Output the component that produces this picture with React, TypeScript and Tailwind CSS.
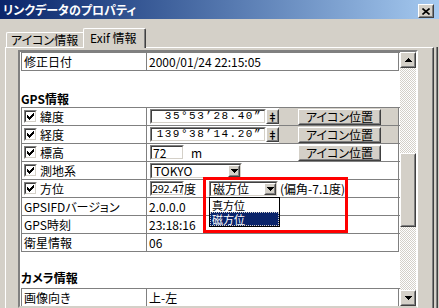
import React from "react";

// Win2000 style bevels
function Sunken({ className = "", inner = "", children }: { className?: string; inner?: string; children?: React.ReactNode }) {
  return (
    <div className={`border border-t-[#808080] border-l-[#808080] border-r-white border-b-white ${className}`}>
      <div className={`w-full h-full border border-t-[#404040] border-l-[#404040] border-r-[#d4d0c8] border-b-[#d4d0c8] bg-white ${inner}`}>
        {children}
      </div>
    </div>
  );
}

function Raised({ className = "", inner = "", children }: { className?: string; inner?: string; children?: React.ReactNode }) {
  return (
    <div className={`border border-t-white border-l-white border-r-[#404040] border-b-[#404040] ${className}`}>
      <div className={`w-full h-full border border-t-[#d4d0c8] border-l-[#d4d0c8] border-r-[#808080] border-b-[#808080] bg-[#d4d0c8] ${inner}`}>
        {children}
      </div>
    </div>
  );
}

function Arrow({ up = false }: { up?: boolean }) {
  return (
    <svg width="7" height="4" viewBox="0 0 7 4" shapeRendering="crispEdges">
      <path d={up ? "M3.5 0 L7 4 L0 4 Z" : "M0 0 L7 0 L3.5 4 Z"} fill="#000" />
    </svg>
  );
}

function Check() {
  return (
    <div className="w-[13px] h-[13px] shrink-0 border border-t-[#808080] border-l-[#808080] border-r-white border-b-white">
      <div className="w-full h-full border border-t-[#404040] border-l-[#404040] border-r-[#d4d0c8] border-b-[#d4d0c8] bg-white flex items-center justify-center">
        <svg width="7" height="7" viewBox="0 0 7 7" shapeRendering="crispEdges">
          <path d="M0 2 L2 4 L6 0 L7 0 L7 3 L2 7 L0 5 Z" fill="#000" />
        </svg>
      </div>
    </div>
  );
}

function Row({ left, children, right = "" }: { left: React.ReactNode; children?: React.ReactNode; right?: string }) {
  return (
    <div className="flex h-[18px] border-t border-[#808080]">
      <div className="w-[125px] border-l border-[#808080] flex items-center pl-[2px] whitespace-nowrap">{left}</div>
      <div className={`w-[253px] border-l border-r border-[#808080] flex items-center whitespace-nowrap ${right}`}>{children}</div>
    </div>
  );
}

function CheckLabel({ text }: { text: string }) {
  return (
    <div className="flex items-center gap-[3px]">
      <Check />
      <span>{text}</span>
    </div>
  );
}

function IconPosButton() {
  return (
    <Raised className="w-[83px] h-[16px]" inner="flex items-center justify-center text-[12px] leading-none">
      アイコン位置
    </Raised>
  );
}

function Combo({ text, w }: { text: string; w: string }) {
  return (
    <Sunken className={`${w} h-[16px]`} inner="flex items-center justify-between">
      <span className="pl-[2px] leading-none">{text}</span>
      <Raised className="w-[12px] h-full" inner="flex items-center justify-center">
        <Arrow />
      </Raised>
    </Sunken>
  );
}

function Coord({ value }: { value: string }) {
  return (
    <div className="flex items-center">
      <Sunken className="w-[116px] h-[15px]" inner="flex items-center justify-end pr-[2px] overflow-hidden">
        <span className="font-['Liberation_Mono',monospace] text-[11px] tracking-[1.5px] leading-none">{value}</span>
      </Sunken>
      <Raised className="w-[13px] h-[15px]" inner="flex items-center justify-center">
        <span className="text-[10px] font-bold leading-none">‡</span>
      </Raised>
    </div>
  );
}

export default function App() {
  return (
    <div className="w-[439px] h-[308px] bg-[#d4d0c8] overflow-hidden flex flex-col font-['Noto_Sans_CJK_JP',sans-serif] text-[12px] text-black [font-feature-settings:'palt']">
      {/* title bar */}
      <div className="h-[19px] shrink-0 flex items-start justify-between pl-[3px] pr-[5px] bg-linear-to-r from-[#0a246a] to-[#a6caf0]">
        <span className="pt-[4px] leading-[12px] text-white font-bold">リンクデータのプロパティ</span>
        <Raised className="mt-[4px] w-[16px] h-[14px]" inner="flex items-center justify-center">
          <svg width="8" height="7" viewBox="0 0 8 7">
            <path d="M0.5 0.5 L7.5 6.5 M7.5 0.5 L0.5 6.5" stroke="#000" strokeWidth="1.6" />
          </svg>
        </Raised>
      </div>

      {/* tabs */}
      <div className="h-[28px] shrink-0 flex items-end pl-[6px]">
        <div className="w-[77px] h-[15px] border-t border-l border-white rounded-tl-[2px] flex items-center pl-[4px] leading-none">
          アイコン情報
        </div>
        <div className="relative z-10 -mb-px w-[63px] h-[20px] border-t border-l border-r border-t-white border-l-white border-r-[#404040] rounded-t-[2px] bg-[#d4d0c8]">
          <div className="h-full border-r border-[#808080] flex items-center pl-[6px] pb-[2px] leading-none">Exif 情報</div>
        </div>
      </div>

      {/* panel */}
      <div className="flex-1 flex min-h-0">
        <div className="w-[5px]" />
        <div className="w-[429px] border-t border-l border-r border-t-white border-l-white border-r-[#404040]">
          <div className="h-full border-r border-[#808080] pl-[12px] pt-[2px]">
            {/* list box */}
            <div className="w-[400px] h-[258px] border-2 border-t-[#808080] border-l-[#808080] border-r-white border-b-[#d4d0c8]">
              <div className="w-full h-full flex">
                <div className="relative w-[380px] h-full bg-white pl-px overflow-hidden">
                  <Row left="修正日付" right="pl-[2px]">2000/01/24 22:15:05</Row>
                  <div className="w-[378px] h-px bg-[#808080]" />

                  <div className="h-[36px] flex items-end pb-[2px] font-bold leading-none">GPS情報</div>

                  <Row left={<CheckLabel text="緯度" />} right="items-stretch">
                    <div className="w-[132px] flex items-center pl-[3px]">
                      <Coord value="35°53’28.40”" />
                    </div>
                    <div className="flex-1 bg-[#d4d0c8] flex items-center pl-[19px]">
                      <IconPosButton />
                    </div>
                  </Row>
                  <Row left={<CheckLabel text="経度" />} right="items-stretch">
                    <div className="w-[132px] flex items-center pl-[3px]">
                      <Coord value="139°38’14.20”" />
                    </div>
                    <div className="flex-1 bg-[#d4d0c8] flex items-center pl-[19px]">
                      <IconPosButton />
                    </div>
                  </Row>
                  <Row left={<CheckLabel text="標高" />} right="items-stretch">
                    <div className="w-[132px] flex items-center pl-[3px]">
                      <Sunken className="w-[34px] h-[15px]" inner="flex items-center pl-[1px] leading-none">72</Sunken>
                      <span className="ml-[7px] leading-none">m</span>
                    </div>
                    <div className="flex-1 flex items-center pl-[19px]">
                      <IconPosButton />
                    </div>
                  </Row>
                  <Row left={<CheckLabel text="測地系" />} right="pl-[3px]">
                    <Combo text="TOKYO" w="w-[92px]" />
                  </Row>
                  <Row left={<CheckLabel text="方位" />} right="pl-[3px]">
                    <Sunken className="w-[34px] h-[15px]" inner="flex items-center leading-none text-[11px] tracking-[-0.3px]">292.47</Sunken>
                    <span className="leading-none">度</span>
                    <div className="ml-[13px]">
                      <Combo text="磁方位" w="w-[69px]" />
                    </div>
                    <span className="ml-[2px] leading-none">(偏角-7.1度)</span>
                  </Row>
                  <Row left="GPSIFDバージョン" right="pl-[2px]">2.0.0.0</Row>
                  <Row left="GPS時刻" right="pl-[2px]">23:18:16</Row>
                  <Row left="衛星情報" right="pl-[2px]">06</Row>
                  <div className="w-[378px] h-px bg-[#808080]" />

                  <div className="h-[36px] flex items-end pb-[4px] font-bold leading-none">カメラ情報</div>

                  <Row left="画像向き" right="pl-[2px]">上-左</Row>
                  <div className="w-[378px] h-px bg-[#808080]" />

                  {/* highlight box */}
                  <div className="absolute left-[183px] top-[125px] w-[145px] h-[56px] border-[3px] border-[#ff0000]" />

                  {/* open dropdown */}
                  <div className="absolute left-[189px] top-[145px] w-[71px] border border-black bg-white flex flex-col text-[11px]">
                    <div className="h-[14px] leading-[14px] pl-[2px]">真方位</div>
                    <div className="h-[14px] leading-[14px] pl-[2px] bg-[#0a246a] text-white outline outline-1 outline-dotted outline-[#d4d0c8] -outline-offset-1">磁方位</div>
                  </div>
                </div>

                {/* scrollbar */}
                <div className="w-[16px] h-full flex flex-col">
                  <Raised className="h-[16px] shrink-0" inner="flex items-center justify-center">
                    <Arrow up />
                  </Raised>
                  <div className="flex-1 flex flex-col bg-[repeating-conic-gradient(#ffffff_0%_25%,#d4d0c8_0%_50%)] bg-[length:2px_2px]">
                    <div className="h-[85px]" />
                    <Raised className="h-[74px]" />
                  </div>
                  <Raised className="h-[16px] shrink-0" inner="flex items-center justify-center">
                    <Arrow />
                  </Raised>
                </div>
              </div>
            </div>
          </div>
        </div>
        <div className="w-[5px] flex">
          <div className="w-[2px]" />
          <div className="w-px bg-[#808080]" />
          <div className="w-px bg-[#404040]" />
        </div>
      </div>
    </div>
  );
}
